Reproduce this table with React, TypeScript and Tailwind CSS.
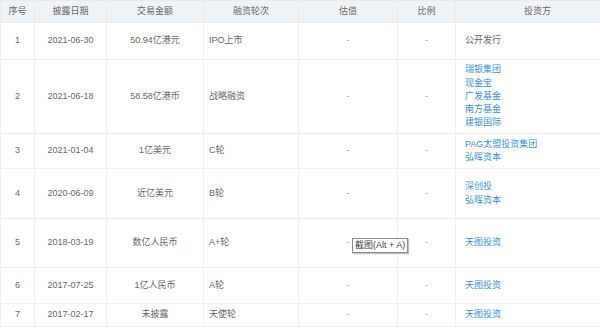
import React from 'react';

type Row = {
  no: number;
  date: string;
  amount: string;
  round: string;
  investors: string[];
  linked: boolean;
  h: string;
};

const rows: Row[] = [
  { no: 1, date: '2021-06-30', amount: '50.94亿港元', round: 'IPO上市', investors: ['公开发行'], linked: false, h: 'h-[37px]' },
  { no: 2, date: '2021-06-18', amount: '58.58亿港币', round: '战略融资', investors: ['瑞银集团', '现金宝', '广发基金', '南方基金', '建银国际'], linked: true, h: 'h-[74px]' },
  { no: 3, date: '2021-01-04', amount: '1亿美元', round: 'C轮', investors: ['PAG太盟投资集团', '弘晖资本'], linked: true, h: 'h-[35px]' },
  { no: 4, date: '2020-06-09', amount: '近亿美元', round: 'B轮', investors: ['深创投', '弘晖资本'], linked: true, h: 'h-[50px]' },
  { no: 5, date: '2018-03-19', amount: '数亿人民币', round: 'A+轮', investors: ['天图投资'], linked: true, h: 'h-[49px]' },
  { no: 6, date: '2017-07-25', amount: '1亿人民币', round: 'A轮', investors: ['天图投资'], linked: true, h: 'h-[36px]' },
  { no: 7, date: '2017-02-17', amount: '未披露', round: '天使轮', investors: ['天图投资'], linked: true, h: 'h-[23px]' },
];

const headers = ['序号', '披露日期', '交易金额', '融资轮次', '估值', '比例', '投资方'];

const App: React.FC = () => {
  return (
    <div className="relative w-[600px] h-[330px] overflow-hidden bg-white font-['Liberation_Sans','Noto_Sans_CJK_SC',sans-serif] text-[9px] text-[#666]">
      <table className="w-[620px] table-fixed border-collapse">
        <colgroup>
          <col className="w-[34px]" />
          <col className="w-[72px]" />
          <col className="w-[97px]" />
          <col className="w-[95px]" />
          <col className="w-[99px]" />
          <col className="w-[58px]" />
          <col />
        </colgroup>
        <thead>
          <tr className="h-[22px] bg-[#eef3f8]">
            {headers.map((h) => (
              <th key={h} className="border border-[#e6ebf0] font-normal text-center text-[#666] p-0">
                {h}
              </th>
            ))}
          </tr>
        </thead>
        <tbody>
          {rows.map((r) => (
            <tr key={r.no} className={r.h}>
              <td className="border border-[#edf0f3] text-center p-0">{r.no}</td>
              <td className="border border-[#edf0f3] text-center p-0">{r.date}</td>
              <td className="border border-[#edf0f3] text-center p-0">{r.amount}</td>
              <td className="border border-[#edf0f3] pl-[5px] p-0">{r.round}</td>
              <td className="border border-[#edf0f3] text-center p-0 text-[#999]">-</td>
              <td className="border border-[#edf0f3] text-center p-0 text-[#999]">-</td>
              <td className="border border-[#edf0f3] pl-[9px] py-0 leading-[13.3px]">
                {r.investors.map((inv) => (
                  <div key={inv} className={r.linked ? 'text-[#3a8ddc]' : 'text-[#666]'}>
                    {inv}
                  </div>
                ))}
              </td>
            </tr>
          ))}
        </tbody>
      </table>

      {/* screenshot tooltip */}
      <div className="absolute left-[352px] top-[238px] h-[15px] px-[2px] bg-white border border-[#8a8a8a] shadow-[1px_1px_1px_rgba(0,0,0,0.25)] text-[9px] leading-[13px] text-[#444] whitespace-nowrap">
        截图(Alt + A)
      </div>
    </div>
  );
};

export default App;
